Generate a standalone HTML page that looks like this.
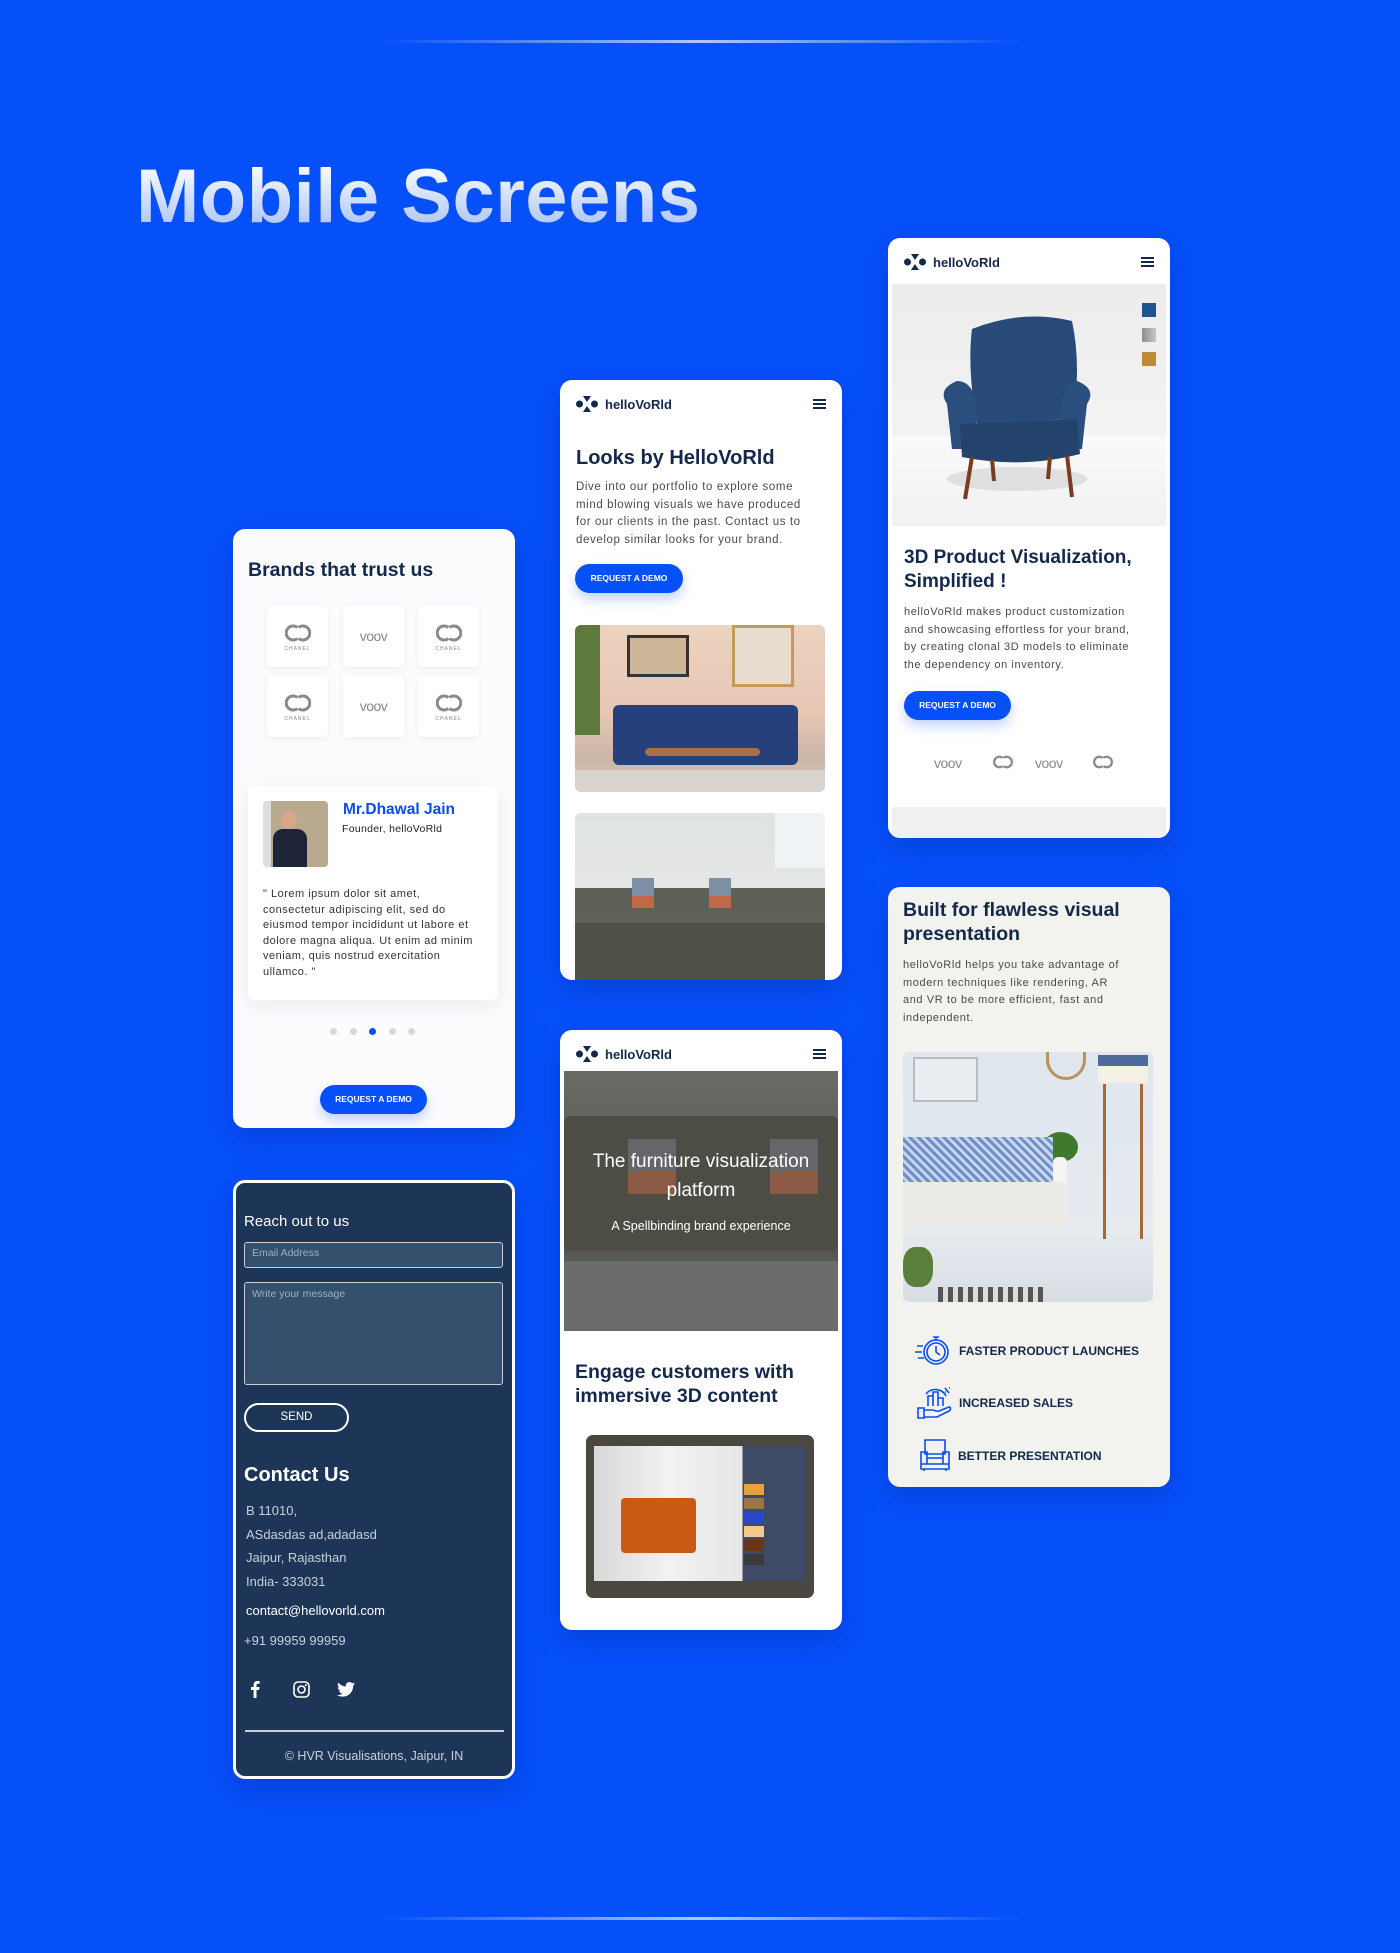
<!DOCTYPE html>
<html><head><meta charset="utf-8">
<style>
*{margin:0;padding:0;box-sizing:border-box}
body{width:1400px;height:1953px;background:#0650fa;position:relative;overflow:hidden;font-family:"Liberation Sans",sans-serif;color:#14284b}
.abs{position:absolute}
.line{position:absolute;left:380px;width:641px;height:3px;background:linear-gradient(90deg,rgba(255,255,255,0),rgba(190,215,255,.9) 50%,rgba(255,255,255,0))}
.title{position:absolute;left:136px;top:153px;font-size:76px;letter-spacing:0.5px;font-weight:bold;background:linear-gradient(180deg,#ffffff 10%,#a9c2f7 90%);-webkit-background-clip:text;background-clip:text;color:transparent}
.card{position:absolute;width:282px;height:600px;background:#fff;border-radius:12px;overflow:hidden;box-shadow:0 10px 30px rgba(0,20,120,.25)}
.hdr{position:absolute;left:16px;top:14px;height:20px;display:flex;align-items:center;font-size:13px;font-weight:bold;color:#14284b}
.hdr svg{margin-right:7px}
.ham{position:absolute;right:16px;top:19px;width:13px;height:10px;border-top:2px solid #14284b;border-bottom:2px solid #14284b}
.ham:after{content:"";position:absolute;left:0;right:0;top:2px;border-top:2px solid #14284b}
h2{position:absolute;font-size:20px;font-weight:bold;color:#14284b;line-height:24px}
.p{position:absolute;font-size:11.5px;letter-spacing:0.6px;line-height:17.5px;color:#4a4a4a;white-space:nowrap}
.btn{position:absolute;background:#0650fa;color:#fff;border-radius:15px;font-size:8.5px;font-weight:bold;text-align:center;box-shadow:0 6px 12px rgba(6,80,250,.25)}
.tile{position:absolute;width:61px;height:62px;background:#fff;border-radius:4px;box-shadow:0 2px 8px rgba(0,0,0,.06);display:flex;align-items:center;justify-content:center;flex-direction:column;color:#888}
.cn{font-size:5px;letter-spacing:1px;color:#888;margin-top:1px}
.voov{font-size:14px;color:#888;letter-spacing:-0.5px}
.dot{position:absolute;width:7px;height:7px;border-radius:50%;background:#d8d8dc}
.white{color:#fff}
</style></head><body>
<svg width="0" height="0" style="position:absolute"><defs><g id="cc" fill="none" stroke="#8a8a8a" stroke-width="3"><path d="M12.5 6.5A7 7 0 1 0 12.5 17.5"/><path d="M13.5 6.5A7 7 0 1 1 13.5 17.5"/></g></defs></svg>
<div class="line" style="top:40px"></div>
<div class="line" style="top:1917px"></div>
<div class="title">Mobile Screens</div>

<!-- Card A -->
<div class="card" style="left:233px;top:529px;height:599px;background:#fcfcfe">
  <h2 style="left:15px;top:29px;font-size:19.5px">Brands that trust us</h2>
  <div class="tile" style="left:34px;top:76px"><svg width="26" height="24" viewBox="0 0 26 24"><use href="#cc"/></svg><div class="cn">CHANEL</div></div>
  <div class="tile" style="left:110px;top:76px"><div class="voov">voov</div></div>
  <div class="tile" style="left:185px;top:76px"><svg width="26" height="24" viewBox="0 0 26 24"><use href="#cc"/></svg><div class="cn">CHANEL</div></div>
  <div class="tile" style="left:34px;top:146px"><svg width="26" height="24" viewBox="0 0 26 24"><use href="#cc"/></svg><div class="cn">CHANEL</div></div>
  <div class="tile" style="left:110px;top:146px"><div class="voov">voov</div></div>
  <div class="tile" style="left:185px;top:146px"><svg width="26" height="24" viewBox="0 0 26 24"><use href="#cc"/></svg><div class="cn">CHANEL</div></div>
  <div class="abs" style="left:15px;top:257px;width:250px;height:214px;background:#fff;border-radius:6px;box-shadow:0 6px 20px rgba(20,30,80,.08)">
    <div class="abs" style="left:15px;top:15px;width:65px;height:66px;border-radius:4px;background:linear-gradient(90deg,#ddd 0 12%,#b9a98f 12% 100%)">
      <div class="abs" style="left:18px;top:10px;width:16px;height:18px;border-radius:50%;background:#d8a888"></div>
      <div class="abs" style="left:10px;top:28px;width:34px;height:38px;border-radius:10px 10px 0 0;background:#1d2438"></div>
    </div>
    <div class="abs" style="left:95px;top:15px;font-size:15.5px;font-weight:bold;color:#0a4cf0">Mr.Dhawal Jain</div>
    <div class="abs" style="left:94px;top:37px;font-size:10.5px;letter-spacing:.3px;color:#222">Founder, helloVoRld</div>
    <div class="abs" style="left:15px;top:101px;font-size:11px;letter-spacing:.5px;line-height:15.5px;color:#333;white-space:nowrap">" Lorem ipsum dolor sit amet,<br>consectetur adipiscing elit, sed do<br>eiusmod tempor incididunt ut labore et<br>dolore magna aliqua. Ut enim ad minim<br>veniam, quis nostrud exercitation<br>ullamco. "</div>
  </div>
  <div class="dot" style="left:97px;top:499px"></div>
  <div class="dot" style="left:117px;top:499px"></div>
  <div class="dot" style="left:136px;top:499px;background:#0650fa"></div>
  <div class="dot" style="left:156px;top:499px"></div>
  <div class="dot" style="left:175px;top:499px"></div>
  <div class="btn" style="left:87px;top:556px;width:107px;height:29px;line-height:29px">REQUEST A DEMO</div>
</div>

<!-- Card B -->
<div class="card" style="left:560px;top:380px">
  <div class="hdr"><svg width="22" height="16" viewBox="0 0 22 16"><circle cx="3.5" cy="8" r="3.5" fill="#14284b"/><circle cx="18.5" cy="8" r="3.5" fill="#14284b"/><path d="M7 0h8l-4 6z M7 16h8l-4-6z" fill="#14284b"/></svg>helloVoRld</div>
  <div class="ham"></div>
  <h2 style="left:16px;top:66px">Looks by HelloVoRld</h2>
  <div class="p" style="left:16px;top:99px">Dive into our portfolio to explore some<br>mind blowing visuals we have produced<br>for our clients in the past. Contact us to<br>develop similar looks for your brand.</div>
  <div class="btn" style="left:15px;top:184px;width:108px;height:29px;line-height:29px">REQUEST A DEMO</div>
  <div class="abs" style="left:15px;top:245px;width:250px;height:167px;border-radius:6px;overflow:hidden;background:linear-gradient(180deg,#ecd2c0 0%,#e6c6b3 55%,#c9b5a7 80%,#d8cdc3 100%)">
    <div class="abs" style="left:52px;top:10px;width:62px;height:42px;background:#cdb79a;border:3px solid #333"></div>
    <div class="abs" style="left:157px;top:0;width:62px;height:62px;background:#e8dcd0;border:3px solid #c49a5a"></div>
    <div class="abs" style="left:0;top:0;width:25px;height:110px;background:#5d7a3c"></div>
    <div class="abs" style="left:38px;top:80px;width:185px;height:60px;border-radius:6px;background:#25407a"></div>
    <div class="abs" style="left:70px;top:123px;width:115px;height:8px;background:#a86f44;border-radius:4px"></div>
    <div class="abs" style="left:0;top:145px;width:250px;height:22px;background:#d9d4ce"></div>
  </div>
  <div class="abs" style="left:15px;top:433px;width:250px;height:167px;border-radius:6px 6px 0 0;overflow:hidden;background:linear-gradient(180deg,#dfe3e2 0%,#e4e6e5 45%,#5e5f55 45%,#63645a 100%)">
    <div class="abs" style="left:0;top:110px;width:250px;height:57px;background:#4f5048"></div>
    <div class="abs" style="left:57px;top:65px;width:22px;height:30px;background:linear-gradient(180deg,#7d8fa5 60%,#c0694a 60%)"></div>
    <div class="abs" style="left:134px;top:65px;width:22px;height:30px;background:linear-gradient(180deg,#7d8fa5 60%,#c0694a 60%)"></div>
    <div class="abs" style="left:200px;top:0;width:50px;height:55px;background:#f0f3f6"></div>
  </div>
</div>

<!-- Card C -->
<div class="card" style="left:888px;top:238px">
  <div class="hdr"><svg width="22" height="16" viewBox="0 0 22 16"><circle cx="3.5" cy="8" r="3.5" fill="#14284b"/><circle cx="18.5" cy="8" r="3.5" fill="#14284b"/><path d="M7 0h8l-4 6z M7 16h8l-4-6z" fill="#14284b"/></svg>helloVoRld</div>
  <div class="ham"></div>
  <div class="abs" style="left:4px;top:46px;width:274px;height:242px;background:linear-gradient(180deg,#ececec 0%,#f3f3f3 63%,#fafafa 63%,#f1f1f1 100%)">
    <svg class="abs" style="left:40px;top:25px" width="170" height="200" viewBox="0 0 170 200">
      <ellipse cx="85" cy="170" rx="70" ry="12" fill="#d0d0d0" opacity=".6"/>
      <path d="M40 20 Q90 0 140 12 Q150 60 140 110 L45 115 Q35 60 40 20z" fill="#274a78"/>
      <path d="M15 95 Q5 80 25 72 Q45 72 45 110 L40 140 L20 140z" fill="#2a4e7e"/>
      <path d="M155 95 Q165 80 145 72 Q130 72 128 110 L132 140 L150 140z" fill="#2a4e7e"/>
      <path d="M28 115 L145 110 L148 145 Q90 160 30 148z" fill="#23436d"/>
      <path d="M40 148 L33 190 M135 146 L140 188 M60 150 L62 172 M118 148 L116 170" stroke="#7a3c1e" stroke-width="4"/>
    </svg>
    <div class="abs" style="left:250px;top:19px;width:14px;height:14px;background:#1f5490"></div>
    <div class="abs" style="left:250px;top:44px;width:14px;height:14px;background:linear-gradient(90deg,#8d8d8d,#c6c6c6)"></div>
    <div class="abs" style="left:250px;top:68px;width:14px;height:14px;background:#c08a3a"></div>
  </div>
  <h2 style="left:16px;top:308px;font-size:19px;line-height:24px;white-space:nowrap">3D Product Visualization,<br>Simplified !</h2>
  <div class="p" style="left:16px;top:366px;font-size:11px;letter-spacing:.6px;line-height:17.5px">helloVoRld makes product customization<br>and showcasing effortless for your brand,<br>by creating clonal 3D models to eliminate<br>the dependency on inventory.</div>
  <div class="btn" style="left:16px;top:453px;width:107px;height:29px;line-height:29px">REQUEST A DEMO</div>
  <div class="abs voov" style="left:46px;top:517px">voov</div>
  <svg class="abs" style="left:105px;top:515px" width="20" height="18" viewBox="0 0 26 24"><use href="#cc"/></svg>
  <div class="abs voov" style="left:147px;top:517px">voov</div>
  <svg class="abs" style="left:205px;top:515px" width="20" height="18" viewBox="0 0 26 24"><use href="#cc"/></svg>
  <div class="abs" style="left:4px;top:569px;width:274px;height:31px;background:#f0f0f0"></div>
</div>

<!-- Card D -->
<div class="card" style="left:233px;top:1180px;height:599px;background:#1d3657;border:3px solid #fff">
  <div class="abs white" style="left:8px;top:30px;font-size:15px">Reach out to us</div>
  <div class="abs" style="left:8px;top:59px;width:259px;height:26px;background:#34506d;border:1.5px solid #c9ced6;border-radius:3px;font-size:10.5px;color:#9fb0c3;padding:4px 7px">Email Address</div>
  <div class="abs" style="left:8px;top:99px;width:259px;height:103px;background:#34506d;border:1.5px solid #c9ced6;border-radius:3px;font-size:10.5px;color:#9fb0c3;padding:5px 7px">Write your message</div>
  <div class="abs white" style="left:8px;top:220px;width:105px;height:29px;border:2px solid #fff;border-radius:15px;text-align:center;line-height:25px;font-size:11.5px">SEND</div>
  <div class="abs white" style="left:8px;top:281px;font-size:20px;font-weight:bold">Contact Us</div>
  <div class="abs" style="left:10px;top:316px;font-size:13px;line-height:23.5px;color:#c7d0dc">B 11010,<br>ASdasdas ad,adadasd<br>Jaipur, Rajasthan<br>India- 333031</div>
  <div class="abs white" style="left:10px;top:420px;font-size:13px">contact@hellovorld.com</div>
  <div class="abs" style="left:8px;top:450px;font-size:13px;color:#c7d0dc">+91 99959 99959</div>
  <svg class="abs" style="left:14px;top:497px" width="10" height="18" viewBox="0 0 10 18"><path d="M6.5 18V10h2.6l.4-3H6.5V5.2c0-.9.3-1.5 1.5-1.5H9.6V1.1C9.3 1 8.4 1 7.4 1 5.1 1 3.6 2.4 3.6 4.9V7H1v3h2.6v8z" fill="#fff"/></svg>
  <svg class="abs" style="left:57px;top:498px" width="17" height="17" viewBox="0 0 17 17"><rect x="1" y="1" width="15" height="15" rx="4" fill="none" stroke="#fff" stroke-width="1.6"/><circle cx="8.5" cy="8.5" r="3.5" fill="none" stroke="#fff" stroke-width="1.6"/><circle cx="12.9" cy="4.1" r="1" fill="#fff"/></svg>
  <svg class="abs" style="left:101px;top:499px" width="18" height="15" viewBox="0 0 24 20"><path d="M24 2.4c-.9.4-1.8.6-2.8.8 1-.6 1.8-1.6 2.2-2.7-1 .6-2 1-3.1 1.2C19.3.7 18 0 16.6 0c-2.7 0-4.9 2.2-4.9 4.9 0 .4 0 .8.1 1.1C7.7 5.8 4.1 3.9 1.7.9c-.4.7-.7 1.6-.7 2.5 0 1.7.9 3.2 2.2 4.1-.8 0-1.6-.2-2.2-.6v.1c0 2.4 1.7 4.4 3.9 4.8-.4.1-.8.2-1.3.2-.3 0-.6 0-.9-.1.6 2 2.4 3.4 4.6 3.4-1.7 1.3-3.8 2.1-6.1 2.1-.4 0-.8 0-1.2-.1C2.2 18.8 4.8 19.5 7.5 19.5c9.1 0 14-7.5 14-14v-.6c1-.7 1.8-1.6 2.5-2.5z" fill="#fff"/></svg>
  <div class="abs" style="left:9px;top:547px;width:259px;height:1.5px;background:#c9ced6"></div>
  <div class="abs" style="left:0;top:566px;width:276px;text-align:center;font-size:12.5px;color:#c7d0dc">© HVR Visualisations, Jaipur, IN</div>
</div>

<!-- Card E -->
<div class="card" style="left:560px;top:1030px">
  <div class="hdr"><svg width="22" height="16" viewBox="0 0 22 16"><circle cx="3.5" cy="8" r="3.5" fill="#14284b"/><circle cx="18.5" cy="8" r="3.5" fill="#14284b"/><path d="M7 0h8l-4 6z M7 16h8l-4-6z" fill="#14284b"/></svg>helloVoRld</div>
  <div class="ham"></div>
  <div class="abs" style="left:4px;top:41px;width:274px;height:260px;background:linear-gradient(180deg,#6a6b66 0%,#5f605a 30%,#4f504a 60%,#5a5b58 75%,#6b6d6c 100%);overflow:hidden">
    <div class="abs" style="left:0;top:45px;width:274px;height:135px;background:#4d4d45;border-radius:6px"></div>
    <div class="abs" style="left:0;top:190px;width:274px;height:70px;background:#6a6c6c"></div>
    <div class="abs" style="left:64px;top:68px;width:48px;height:55px;background:linear-gradient(180deg,#66666a 60%,#8a5a45 60%)"></div>
    <div class="abs" style="left:206px;top:68px;width:48px;height:55px;background:linear-gradient(180deg,#66666a 60%,#8a5a45 60%)"></div>
    <div class="abs white" style="left:0;top:76px;width:274px;text-align:center;font-size:19px;line-height:29px">The furniture visualization platform</div>
    <div class="abs white" style="left:0;top:148px;width:274px;text-align:center;font-size:12.5px">A Spellbinding brand experience</div>
  </div>
  <h2 style="left:15px;top:331px;font-size:19.5px;line-height:23.5px">Engage customers with immersive 3D content</h2>
  <div class="abs" style="left:26px;top:405px;width:228px;height:163px;border-radius:7px;background:#4a4640;padding:11px 8px 17px 8px">
    <div style="width:100%;height:100%;background:linear-gradient(90deg,#d8d8d8 0%,#f2f2f2 35%,#e6e6e6 70%,#3e4a66 70%);position:relative">
      <div class="abs" style="left:27px;top:52px;width:75px;height:55px;background:#c85a16;border-radius:4px"></div>
      <div class="abs" style="left:150px;top:38px;width:20px;height:11px;background:#e8a23a"></div>
      <div class="abs" style="left:150px;top:52px;width:20px;height:11px;background:#9c7446"></div>
      <div class="abs" style="left:150px;top:66px;width:20px;height:11px;background:#2b47c7"></div>
      <div class="abs" style="left:150px;top:80px;width:20px;height:11px;background:#f5c98c"></div>
      <div class="abs" style="left:150px;top:94px;width:20px;height:11px;background:#6a3516"></div>
      <div class="abs" style="left:150px;top:108px;width:20px;height:11px;background:#3a3a3a"></div>
    </div>
  </div>
</div>

<!-- Card F -->
<div class="card" style="left:888px;top:887px;background:#f2f2ef">
  <h2 style="left:15px;top:11px;font-size:19.5px;line-height:24px;white-space:nowrap">Built for flawless visual<br>presentation</h2>
  <div class="p" style="left:15px;top:70px;font-size:11px;letter-spacing:.6px;line-height:17.5px">helloVoRld helps you take advantage of<br>modern techniques like rendering, AR<br>and VR to be more efficient, fast and<br>independent.</div>
  <div class="abs" style="left:15px;top:165px;width:250px;height:250px;border-radius:6px;overflow:hidden;background:linear-gradient(180deg,#dfe6ee 0%,#e6ebf0 72%,#d7dde3 100%)">
    <div class="abs" style="left:10px;top:5px;width:65px;height:45px;background:#e9ecf0;border:2px solid #b8bcc0"></div>
    <div class="abs" style="left:143px;top:0;width:40px;height:28px;border:3px solid #b8935e;border-radius:0 0 20px 20px;border-top:none"></div>
    <div class="abs" style="left:195px;top:3px;width:50px;height:28px;background:linear-gradient(180deg,#4d6a9c 40%,#f4f0e6 40%)"></div>
    <div class="abs" style="left:200px;top:32px;width:40px;height:155px;border-left:3px solid #a86a33;border-right:3px solid #a86a33"></div>
    <div class="abs" style="left:140px;top:80px;width:35px;height:30px;background:#3f7a2a;border-radius:50%"></div>
    <div class="abs" style="left:150px;top:105px;width:14px;height:30px;background:#f4f4f4;border-radius:5px"></div>
    <div class="abs" style="left:0;top:85px;width:150px;height:55px;background:repeating-linear-gradient(45deg,#6e8fc7 0 3px,#c9d6ee 3px 6px)"></div>
    <div class="abs" style="left:0;top:130px;width:165px;height:45px;background:#eceae6;border-radius:0 8px 8px 0"></div>
    <div class="abs" style="left:35px;top:235px;width:110px;height:15px;background:repeating-linear-gradient(90deg,#555 0 5px,#ddd 5px 10px)"></div>
    <div class="abs" style="left:0;top:195px;width:30px;height:40px;background:#5a7f3c;border-radius:40%"></div>
  </div>
  <svg class="abs" style="left:27px;top:446px" width="36" height="34" viewBox="0 0 36 34" fill="none" stroke="#0a4cf0" stroke-width="1.6"><circle cx="21" cy="19" r="12"/><circle cx="21" cy="19" r="9"/><path d="M18 4h6M21 4v3M21 13v6l4 3M2 13h6M0 19h7M3 25h6"/></svg>
  <div class="abs" style="left:71px;top:457px;font-size:12px;font-weight:bold;color:#14284b">FASTER PRODUCT LAUNCHES</div>
  <svg class="abs" style="left:28px;top:499px" width="36" height="34" viewBox="0 0 36 34" fill="none" stroke="#0a4cf0" stroke-width="1.6"><path d="M2 22h6v10H2zM8 24h8c3 0 5 2 7 1l10-4c2 0 2 3 0 4l-12 6H8"/><path d="M12 20V10h5v10M17 20V6h5v14M22 20V12h5v8"/><path d="M10 8a12 12 0 0 1 20 2M29 2l4 5M29 6h1M33 2h1"/></svg>
  <div class="abs" style="left:71px;top:509px;font-size:12px;font-weight:bold;color:#14284b">INCREASED SALES</div>
  <svg class="abs" style="left:30px;top:551px" width="34" height="34" viewBox="0 0 34 34" fill="none" stroke="#0a4cf0" stroke-width="1.6"><path d="M7 2h20v14H7z M3 14h6v12H3z M25 14h6v12h-6z M9 20h16v6H9z M3 26h28v5H3z M6 31v2M28 31v2"/></svg>
  <div class="abs" style="left:70px;top:562px;font-size:12px;font-weight:bold;color:#14284b">BETTER PRESENTATION</div>
</div>
</body></html>
